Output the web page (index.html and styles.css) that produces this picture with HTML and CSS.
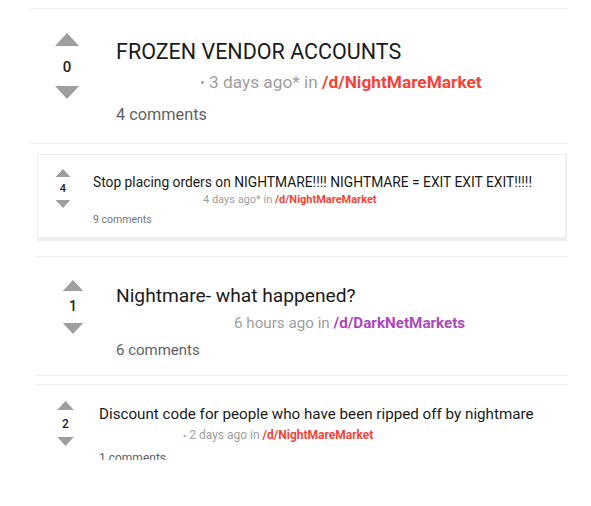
FILE: index.html
```html
<!DOCTYPE html>
<html lang="en">
<head>
    <meta charset="UTF-8">
    <meta name="viewport" content="width=device-width, initial-scale=1.0">
    <title>Posts</title>
    <link rel="stylesheet" href="styles.css">
</head>
<body>
    <div class="feed">
        <div class="post post-xl">
            <div class="vote">
                <svg class="arrow" viewBox="0 0 24 13"><polygon points="12,0 24,13 0,13"/></svg>
                <span class="score">0</span>
                <svg class="arrow" viewBox="0 0 24 13"><polygon points="0,0 24,0 12,13"/></svg>
            </div>
            <div class="body">
                <p class="title">FROZEN VENDOR ACCOUNTS</p>
                <p class="meta"><span class="dot">&bull;</span> 3 days ago* in <a class="sub">/d/NightMareMarket</a></p>
                <p class="comments">4 comments</p>
            </div>
        </div>

        <div class="post post-box">
            <div class="vote">
                <svg class="arrow" viewBox="0 0 24 13"><polygon points="12,0 24,13 0,13"/></svg>
                <span class="score">4</span>
                <svg class="arrow" viewBox="0 0 24 13"><polygon points="0,0 24,0 12,13"/></svg>
            </div>
            <div class="body">
                <p class="title">Stop placing orders on NIGHTMARE!!!! NIGHTMARE = EXIT EXIT EXIT!!!!!</p>
                <p class="meta">4 days ago* in <a class="sub">/d/NightMareMarket</a></p>
                <p class="comments">9 comments</p>
            </div>
        </div>

        <div class="post post-lg">
            <div class="vote">
                <svg class="arrow" viewBox="0 0 24 13"><polygon points="12,0 24,13 0,13"/></svg>
                <span class="score">1</span>
                <svg class="arrow" viewBox="0 0 24 13"><polygon points="0,0 24,0 12,13"/></svg>
            </div>
            <div class="body">
                <p class="title">Nightmare- what happened?</p>
                <p class="meta">6 hours ago in <a class="sub purple">/d/DarkNetMarkets</a></p>
                <p class="comments">6 comments</p>
            </div>
        </div>

        <div class="post post-sm">
            <div class="vote">
                <svg class="arrow" viewBox="0 0 24 13"><polygon points="12,0 24,13 0,13"/></svg>
                <span class="score">2</span>
                <svg class="arrow" viewBox="0 0 24 13"><polygon points="0,0 24,0 12,13"/></svg>
            </div>
            <div class="body">
                <p class="title">Discount code for people who have been ripped off by nightmare</p>
                <p class="meta"><span class="dot">&bull;</span> 2 days ago in <a class="sub">/d/NightMareMarket</a></p>
                <p class="comments">1 comments</p>
            </div>
        </div>
    </div>
</body>
</html>
```

FILE: styles.css
```css
body {
    margin: 0;
    font-family: Roboto, "Liberation Sans", sans-serif;
    background-color: #fff;
    color: #212121;
}
p {
    margin: 0;
}
.feed {
    display: flex;
    flex-direction: column;
    padding-top: 8px;
    width: 567px;
}
.post {
    display: flex;
    align-items: flex-start;
    border-top: 1px solid #eee;
}
.vote {
    display: flex;
    flex-direction: column;
    align-items: center;
}
.arrow {
    display: block;
    fill: #9e9e9e;
}
.score {
    font-weight: 500;
    color: #212121;
}
.body {
    display: flex;
    flex-direction: column;
    align-items: flex-start;
}
.title {
    white-space: nowrap;
    color: #1a1a1a;
}
.meta {
    color: #9e9e9e;
    white-space: nowrap;
}
.dot {
    font-size: 0.8em;
}
.sub {
    color: #f44336;
    font-weight: bold;
}
.sub.purple {
    color: #ab47bc;
}
.comments {
    color: #616161;
    white-space: nowrap;
}

/* first post, large */
.post-xl {
    margin-left: 30px;
    padding-left: 25px;
    border-bottom: 1px solid #eee;
}
.post-xl .vote {
    width: 24px;
    padding-top: 24px;
}
.post-xl .arrow { width: 24px; height: 13px; }
.post-xl .score { font-size: 15px; line-height: 18px; margin: 12px 0 10px; }
.post-xl .body { padding: 30px 0 18px 37px; }
.post-xl .title { font-size: 21.5px; line-height: 26px; }
.post-xl .meta { font-size: 17.3px; line-height: 20px; margin: 7px 0 0 84px; }
.post-xl .comments { font-size: 16.3px; line-height: 20px; margin-top: 12px; }

/* second post, boxed card */
.post-box {
    margin: 10px 0 0 37px;
    padding-left: 17px;
    border: 1px solid #eee;
    border-right-width: 2px;
    border-bottom: 4px solid #eee;
}
.post-box .vote {
    width: 16px;
    padding-top: 14px;
}
.post-box .arrow { width: 16px; height: 8px; }
.post-box .score { font-size: 11px; line-height: 13px; margin: 5px 0; }
.post-box .body { padding: 19px 0 11px 22px; }
.post-box .title { font-size: 13.8px; line-height: 16px; }
.post-box .meta { font-size: 11px; line-height: 12px; margin: 4px 0 0 110px; }
.post-box .comments { font-size: 10.5px; line-height: 12px; margin-top: 8px; color: #757575; }

/* third post */
.post-lg {
    margin: 15px 0 0 36px;
    padding-left: 26px;
    border-bottom: 1px solid #eee;
}
.post-lg .vote {
    width: 22px;
    padding-top: 23px;
}
.post-lg .arrow { width: 22px; height: 11px; }
.post-lg .score { font-size: 14px; line-height: 17px; margin: 7px 0 8px; }
.post-lg .body { padding: 27px 0 16px 32px; }
.post-lg .title { font-size: 19.2px; line-height: 24px; }
.post-lg .meta { font-size: 15.2px; line-height: 18px; margin: 6px 0 0 118px; }
.post-lg .comments { font-size: 15px; line-height: 18px; margin-top: 9px; }

/* fourth post, cut off */
.post-sm {
    margin: 8px 0 0 36px;
    padding-left: 21px;
}
.post-sm .vote {
    width: 17px;
    padding-top: 16px;
}
.post-sm .arrow { width: 17px; height: 9px; }
.post-sm .score { font-size: 12px; line-height: 14px; margin: 7px 0 6px; }
.post-sm .body { padding: 20px 0 0 25px; }
.post-sm .title { font-size: 15.2px; line-height: 18px; }
.post-sm .meta { font-size: 12px; line-height: 13px; margin: 6px 0 0 84px; }
.post-sm .comments {
    font-size: 12px;
    line-height: 14px;
    height: 9px;
    overflow: hidden;
    margin-top: 9px;
}
```
